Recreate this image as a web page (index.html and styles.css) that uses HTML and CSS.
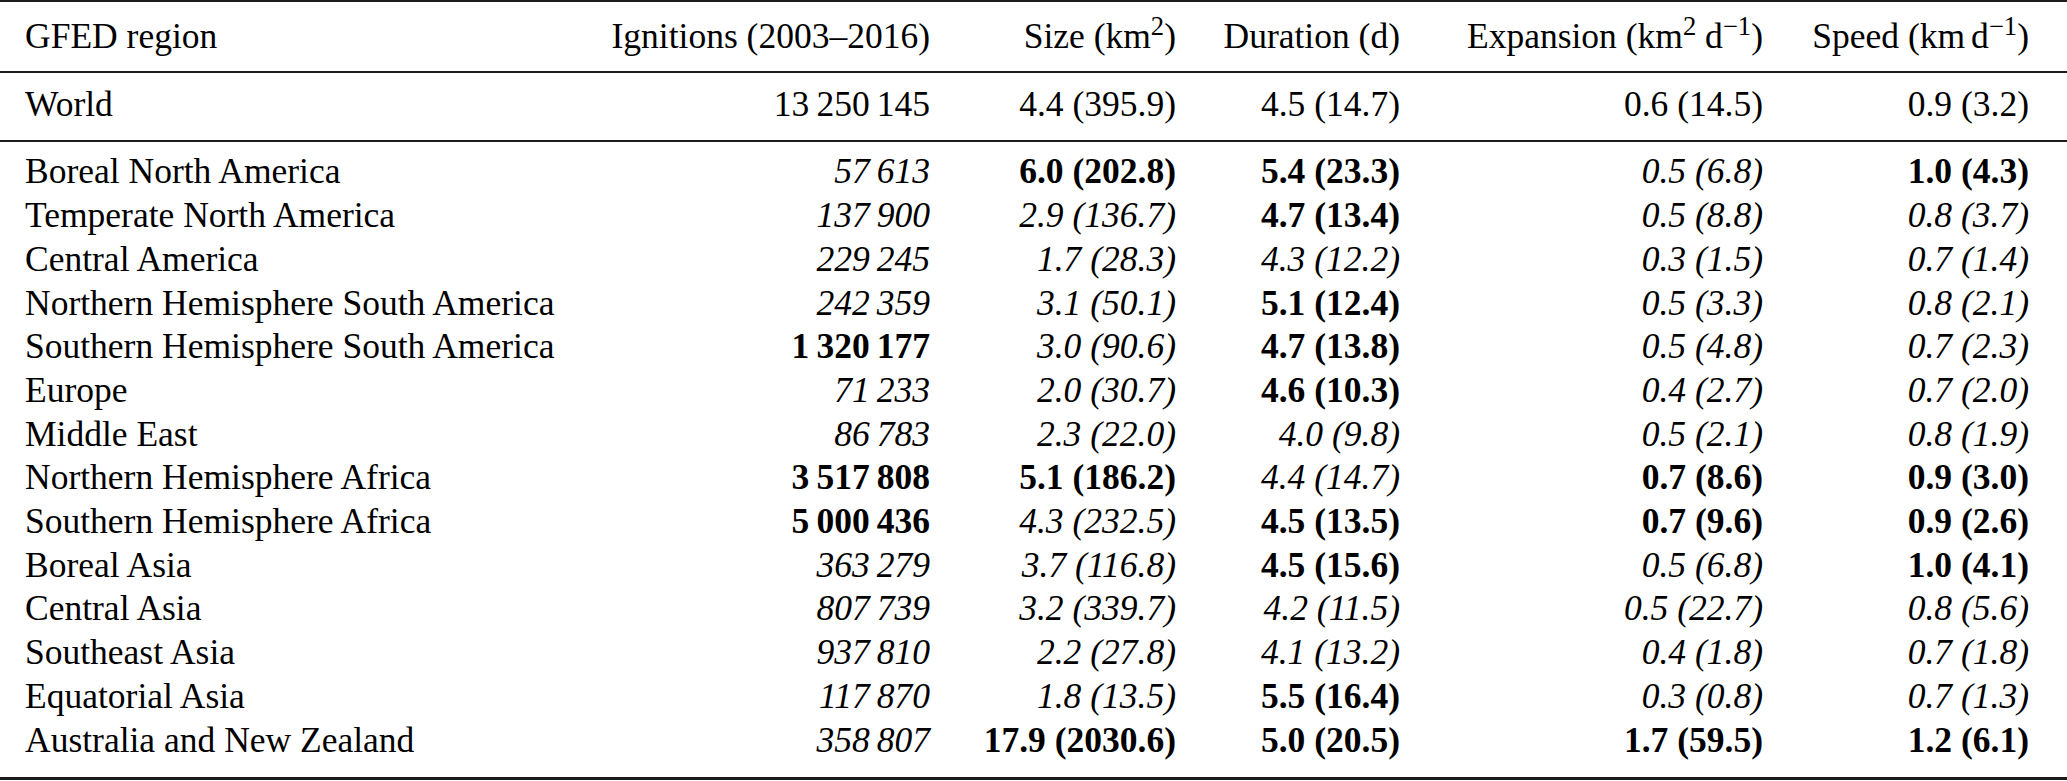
FILE: index.html
```html
<!DOCTYPE html>
<html lang="en">
<head>
<meta charset="utf-8">
<title>GFED regions</title>
<link rel="stylesheet" href="styles.css">
</head>
<body>
<table class="tbl">
  <colgroup>
    <col class="w1"><col class="w2"><col class="w3"><col class="w4"><col class="w5"><col class="w6">
  </colgroup>
  <thead>
    <tr class="head">
      <th class="name">GFED region</th>
      <th>Ignitions (2003–2016)</th>
      <th>Size (km<sup>2</sup>)</th>
      <th>Duration (d)</th>
      <th>Expansion (km<sup>2</sup> d<sup>−1</sup>)</th>
      <th class="last">Speed (km<span class="thin"></span>d<sup>−1</sup>)</th>
    </tr>
  </thead>
  <tbody class="world">
    <tr>
      <td class="name">World</td>
      <td class="num">13 250 145</td>
      <td>4.4 (395.9)</td>
      <td>4.5 (14.7)</td>
      <td>0.6 (14.5)</td>
      <td class="last">0.9 (3.2)</td>
    </tr>
  </tbody>
  <tbody class="body">
    <tr class="first">
      <td class="name">Boreal North America</td>
      <td class="num i">57 613</td>
      <td class="b">6.0 (202.8)</td>
      <td class="b">5.4 (23.3)</td>
      <td class="i">0.5 (6.8)</td>
      <td class="b last">1.0 (4.3)</td>
    </tr>
    <tr>
      <td class="name">Temperate North America</td>
      <td class="num i">137 900</td>
      <td class="i">2.9 (136.7)</td>
      <td class="b">4.7 (13.4)</td>
      <td class="i">0.5 (8.8)</td>
      <td class="i last">0.8 (3.7)</td>
    </tr>
    <tr>
      <td class="name">Central America</td>
      <td class="num i">229 245</td>
      <td class="i">1.7 (28.3)</td>
      <td class="i">4.3 (12.2)</td>
      <td class="i">0.3 (1.5)</td>
      <td class="i last">0.7 (1.4)</td>
    </tr>
    <tr>
      <td class="name">Northern Hemisphere South America</td>
      <td class="num i">242 359</td>
      <td class="i">3.1 (50.1)</td>
      <td class="b">5.1 (12.4)</td>
      <td class="i">0.5 (3.3)</td>
      <td class="i last">0.8 (2.1)</td>
    </tr>
    <tr>
      <td class="name">Southern Hemisphere South America</td>
      <td class="num b">1 320 177</td>
      <td class="i">3.0 (90.6)</td>
      <td class="b">4.7 (13.8)</td>
      <td class="i">0.5 (4.8)</td>
      <td class="i last">0.7 (2.3)</td>
    </tr>
    <tr>
      <td class="name">Europe</td>
      <td class="num i">71 233</td>
      <td class="i">2.0 (30.7)</td>
      <td class="b">4.6 (10.3)</td>
      <td class="i">0.4 (2.7)</td>
      <td class="i last">0.7 (2.0)</td>
    </tr>
    <tr>
      <td class="name">Middle East</td>
      <td class="num i">86 783</td>
      <td class="i">2.3 (22.0)</td>
      <td class="i">4.0 (9.8)</td>
      <td class="i">0.5 (2.1)</td>
      <td class="i last">0.8 (1.9)</td>
    </tr>
    <tr>
      <td class="name">Northern Hemisphere Africa</td>
      <td class="num b">3 517 808</td>
      <td class="b">5.1 (186.2)</td>
      <td class="i">4.4 (14.7)</td>
      <td class="b">0.7 (8.6)</td>
      <td class="b last">0.9 (3.0)</td>
    </tr>
    <tr>
      <td class="name">Southern Hemisphere Africa</td>
      <td class="num b">5 000 436</td>
      <td class="i">4.3 (232.5)</td>
      <td class="b">4.5 (13.5)</td>
      <td class="b">0.7 (9.6)</td>
      <td class="b last">0.9 (2.6)</td>
    </tr>
    <tr>
      <td class="name">Boreal Asia</td>
      <td class="num i">363 279</td>
      <td class="i">3.7 (116.8)</td>
      <td class="b">4.5 (15.6)</td>
      <td class="i">0.5 (6.8)</td>
      <td class="b last">1.0 (4.1)</td>
    </tr>
    <tr>
      <td class="name">Central Asia</td>
      <td class="num i">807 739</td>
      <td class="i">3.2 (339.7)</td>
      <td class="i">4.2 (11.5)</td>
      <td class="i">0.5 (22.7)</td>
      <td class="i last">0.8 (5.6)</td>
    </tr>
    <tr>
      <td class="name">Southeast Asia</td>
      <td class="num i">937 810</td>
      <td class="i">2.2 (27.8)</td>
      <td class="i">4.1 (13.2)</td>
      <td class="i">0.4 (1.8)</td>
      <td class="i last">0.7 (1.8)</td>
    </tr>
    <tr>
      <td class="name">Equatorial Asia</td>
      <td class="num i">117 870</td>
      <td class="i">1.8 (13.5)</td>
      <td class="b">5.5 (16.4)</td>
      <td class="i">0.3 (0.8)</td>
      <td class="i last">0.7 (1.3)</td>
    </tr>
    <tr class="final">
      <td class="name">Australia and New Zealand</td>
      <td class="num i">358 807</td>
      <td class="b">17.9 (2030.6)</td>
      <td class="b">5.0 (20.5)</td>
      <td class="b">1.7 (59.5)</td>
      <td class="b last">1.2 (6.1)</td>
    </tr>
  </tbody>
</table>
</body>
</html>
```

FILE: styles.css
```css
html, body {
  margin: 0;
  padding: 0;
  background: #ffffff;
}

.tbl {
  width: 2067px;
  border-collapse: collapse;
  table-layout: fixed;
  font-family: "Liberation Serif", "Times New Roman", serif;
  font-size: 35.5px;
  line-height: 43.7px;
  color: #000;
}

.w1 { width: 600px; }
.w2 { width: 330px; }
.w3 { width: 246px; }
.w4 { width: 224px; }
.w5 { width: 363px; }
.w6 { width: 304px; }

.tbl th,
.tbl td {
  padding: 0;
  text-align: right;
  font-weight: normal;
  white-space: nowrap;
  height: 43.7px;
}

.tbl .name {
  text-align: left;
  padding-left: 25px;
}

.tbl .last {
  padding-right: 38px;
}

.tbl .num {
  word-spacing: -0.05em;
}

.tbl .thin {
  display: inline-block;
  width: 0.17em;
}

.tbl sup {
  font-size: 0.75em;
  line-height: 0;
  vertical-align: 0.5em;
}

.tbl .i { font-style: italic; }
.tbl .b { font-weight: bold; }

.head {
  border-top: 2px solid #1c1c1c;
  border-bottom: 2px solid #1c1c1c;
}
.head th {
  padding-top: 12.5px;
  padding-bottom: 13px;
}

.world tr {
  border-bottom: 2px solid #1c1c1c;
}
.world td {
  padding-top: 10px;
  padding-bottom: 13px;
}

.body .first td {
  padding-top: 8.5px;
}
.body .final {
  border-bottom: 3px solid #1c1c1c;
}
.body .final td {
  padding-bottom: 15px;
}
```
